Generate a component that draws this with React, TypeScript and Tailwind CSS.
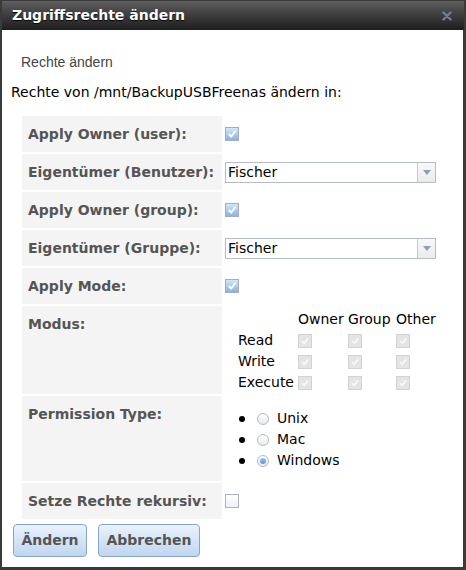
import React from "react";

type BoxState = "checked" | "unchecked" | "disabled";

// Aqua-style checkbox drawn with spans, the stock one renders too flat
const Box: React.FC<{ state: BoxState }> = ({ state }) => {
  if (state === "disabled") {
    return (
      <span className="flex h-[14px] w-[14px] items-center justify-center border border-[#d2d2d2] bg-[#e4e4e4]">
        <svg width="10" height="10" viewBox="0 0 10 10">
          <path d="M2 5.2 L4.2 7.4 L8.2 2.4" fill="none" stroke="#f7f7f7" strokeWidth="1.8" />
        </svg>
      </span>
    );
  }
  if (state === "unchecked") {
    return (
      <span className="block h-[14px] w-[14px] border border-[#a9b2c0] bg-gradient-to-b from-[#ffffff] to-[#eef2f7]" />
    );
  }
  return (
    <span className="flex h-[14px] w-[14px] items-center justify-center border border-[#a3adbd] bg-gradient-to-b from-[#d3e6f7] to-[#86b5e0]">
      <svg width="10" height="10" viewBox="0 0 10 10">
        <path d="M1.8 5 L4.2 7.6 L8.6 1.8" fill="none" stroke="#ffffff" strokeWidth="1.9" />
      </svg>
    </span>
  );
};

const Radio: React.FC<{ selected?: boolean }> = ({ selected }) => (
  <span className="flex h-[12px] w-[12px] items-center justify-center rounded-full border border-[#b4bac4] bg-gradient-to-b from-[#ffffff] to-[#e6ebf1]">
    {selected && <span className="block h-[6px] w-[6px] rounded-full bg-gradient-to-b from-[#9cc4e8] to-[#5d97cc]" />}
  </span>
);

const Select: React.FC<{ value: string }> = ({ value }) => (
  <div className="flex h-[21px] w-[211px] border border-[#b5bcc8] bg-white">
    <span className="flex-1 pl-[2px] text-[14px] leading-[19px] text-black">{value}</span>
    <span className="flex w-[18px] items-center justify-center border-l border-[#c3c8d0] bg-gradient-to-b from-[#f8f8f8] to-[#ebebeb]">
      <svg width="8" height="5" viewBox="0 0 8 5">
        <path d="M0 0 H8 L4 5 Z" fill="#8c9cbb" />
      </svg>
    </span>
  </div>
);

const Row: React.FC<{ label: string; height: string; children: React.ReactNode; valueClass?: string }> = ({
  label,
  height,
  children,
  valueClass,
}) => (
  <div className={`flex gap-[3px] ${height}`}>
    <div className="w-[200px] shrink-0 bg-[#f4f4f4] px-[6px] py-[10px] text-[14px] font-bold leading-[16px] text-[#555555]">
      {label}
    </div>
    <div className={valueClass ?? "flex items-center"}>{children}</div>
  </div>
);

const perms = ["Read", "Write", "Execute"];
const types = [
  { name: "Unix", selected: false },
  { name: "Mac", selected: false },
  { name: "Windows", selected: true },
];

export default function App() {
  return (
    <div className="flex h-[570px] w-[466px] flex-col bg-white font-['DejaVu_Sans',Verdana,sans-serif]">
      <div className="flex h-[30px] shrink-0 items-center justify-between border-x-2 border-t border-[#3a3a3a] bg-gradient-to-b from-[#5e5e5e] to-[#1e1e1e] pl-[10px] pr-[12px]">
        <span className="text-[14px] font-bold text-white [text-shadow:0_1px_1px_#000]">Zugriffsrechte ändern</span>
        <svg width="10" height="10" viewBox="0 0 10 10">
          <path d="M1.5 1.5 L8.5 8.5 M8.5 1.5 L1.5 8.5" stroke="#6f7f92" strokeWidth="2.4" strokeLinecap="round" />
        </svg>
      </div>

      <div className="flex flex-1 flex-col border-b-[3px] border-l-2 border-r-[3px] border-[#3a3a3a]">
        <div className="ml-[19px] mt-[24px] font-['Liberation_Sans',Arial,sans-serif] text-[14px] leading-[16px] text-[#444444]">
          Rechte ändern
        </div>
        <div className="ml-[9px] mt-[14px] text-[14px] leading-[16px] text-black">
          Rechte von /mnt/BackupUSBFreenas ändern in:
        </div>

        <div className="ml-[20px] mt-[16px] flex flex-col gap-[2px]">
          <Row label="Apply Owner (user):" height="h-[36px]">
            <Box state="checked" />
          </Row>
          <Row label="Eigentümer (Benutzer):" height="h-[36px]">
            <Select value="Fischer" />
          </Row>
          <Row label="Apply Owner (group):" height="h-[36px]">
            <Box state="checked" />
          </Row>
          <Row label="Eigentümer (Gruppe):" height="h-[36px]">
            <Select value="Fischer" />
          </Row>
          <Row label="Apply Mode:" height="h-[36px]">
            <Box state="checked" />
          </Row>
          <Row label="Modus:" height="h-[88px]" valueClass="pl-[13px] pt-[3px]">
            <div className="grid grid-cols-[60px_50px_48px_auto] text-[14px] leading-[21px] text-black">
              <span />
              <span>Owner</span>
              <span>Group</span>
              <span>Other</span>
              {perms.map((p) => (
                <React.Fragment key={p}>
                  <span>{p}</span>
                  <span className="flex items-center">
                    <Box state="disabled" />
                  </span>
                  <span className="flex items-center">
                    <Box state="disabled" />
                  </span>
                  <span className="flex items-center">
                    <Box state="disabled" />
                  </span>
                </React.Fragment>
              ))}
            </div>
          </Row>
          <Row label="Permission Type:" height="h-[85px]" valueClass="pl-[14px] pt-[12px]">
            <div className="flex flex-col text-[14px] leading-[21px] text-black">
              {types.map((t) => (
                <div key={t.name} className="flex items-center">
                  <span className="block h-[6px] w-[6px] rounded-full bg-black" />
                  <span className="ml-[12px]">
                    <Radio selected={t.selected} />
                  </span>
                  <span className="ml-[8px]">{t.name}</span>
                </div>
              ))}
            </div>
          </Row>
          <Row label="Setze Rechte rekursiv:" height="h-[36px]">
            <Box state="unchecked" />
          </Row>
        </div>

        <div className="ml-[11px] mt-[5px] flex gap-[11px]">
          <button className="h-[33px] w-[74px] rounded-[4px] border border-[#86a5c9] bg-gradient-to-b from-[#eaf2fc] to-[#bfd6ef] text-[14px] font-bold text-[#555555]">
            Ändern
          </button>
          <button className="h-[33px] w-[102px] rounded-[4px] border border-[#86a5c9] bg-gradient-to-b from-[#eaf2fc] to-[#bfd6ef] text-[14px] font-bold text-[#555555]">
            Abbrechen
          </button>
        </div>
      </div>
    </div>
  );
}
